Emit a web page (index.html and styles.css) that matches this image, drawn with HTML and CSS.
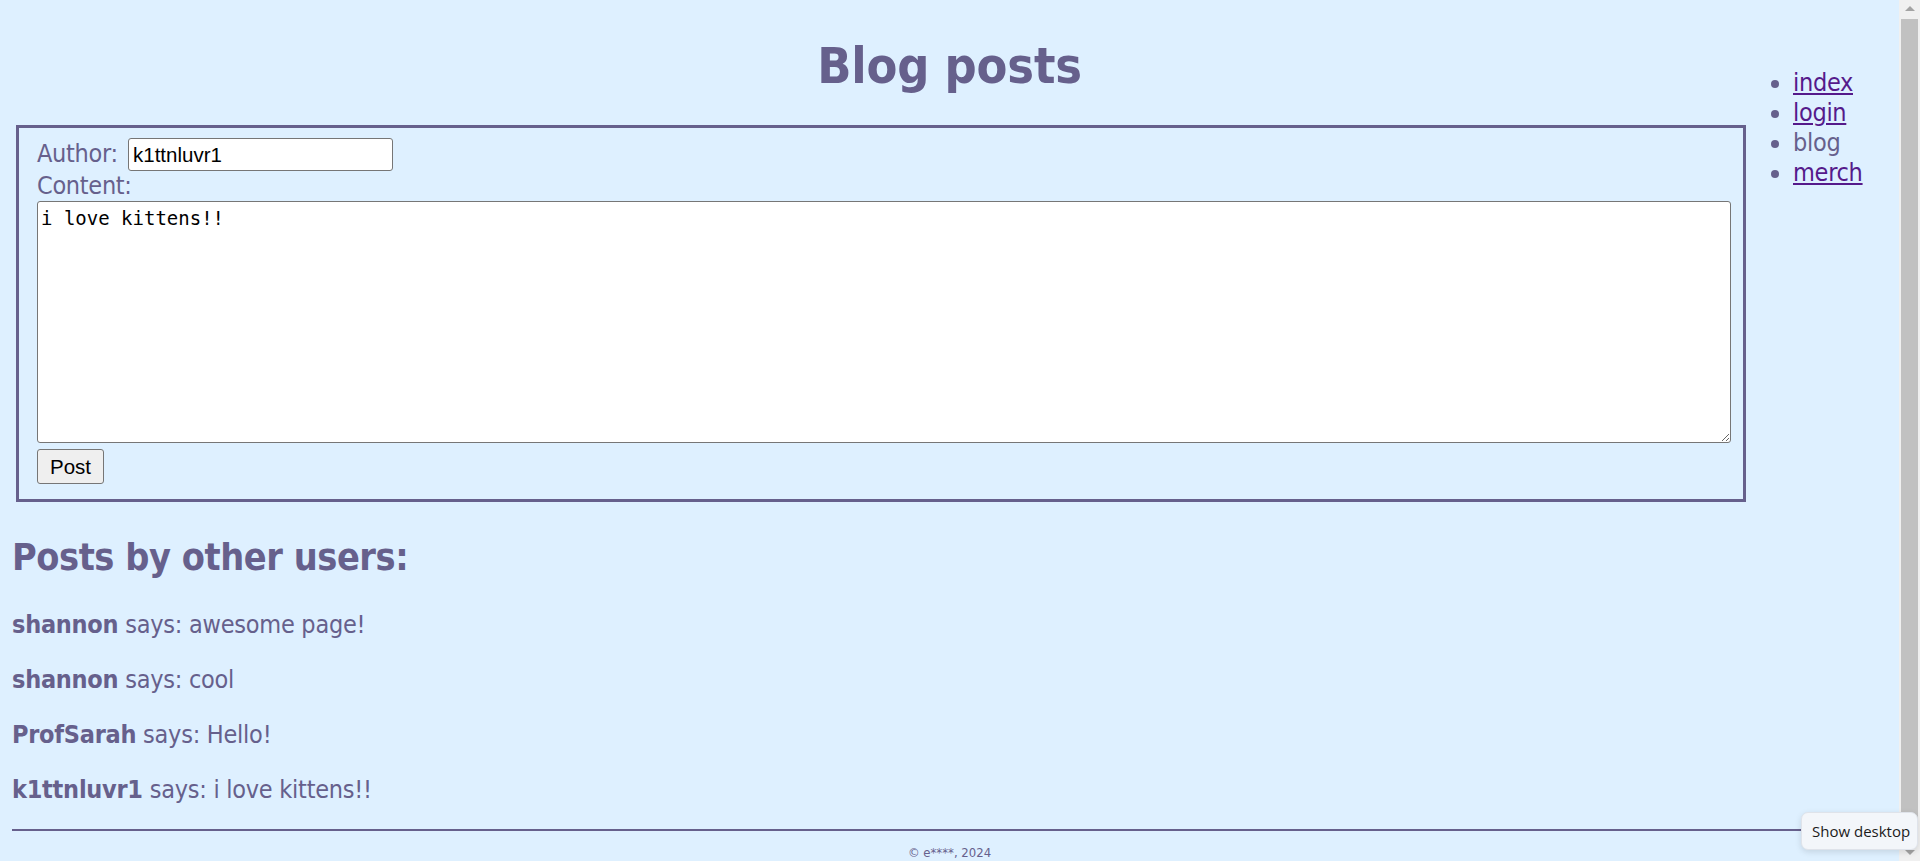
FILE: index.html
```html
<!DOCTYPE html>
<html lang="en">
<head>
<meta charset="utf-8">
<title>Blog posts</title>
<link rel="stylesheet" href="styles.css">
</head>
<body>
<div class="page">
  <div class="layout">
    <h1 class="title">Blog posts</h1>
    <nav class="nav">
      <ul class="nav-list">
        <li><a href="#" class="nav-link">index</a></li>
        <li><a href="#" class="nav-link">login</a></li>
        <li class="nav-current">blog</li>
        <li><a href="#" class="nav-link">merch</a></li>
      </ul>
    </nav>
    <form class="compose">
      <div class="field-row">
        <label class="field-label" for="author">Author:</label>
        <input class="author-input" id="author" type="text" value="k1ttnluvr1">
      </div>
      <label class="content-label" for="content">Content:</label>
      <textarea class="content-input" id="content">i love kittens!!</textarea>
      <button class="post-button" type="button">Post</button>
    </form>
  </div>
  <h2 class="section-title">Posts by other users:</h2>
  <div class="posts">
    <p class="post"><b class="post-author">shannon</b> says: awesome page!</p>
    <p class="post"><b class="post-author">shannon</b> says: cool</p>
    <p class="post"><b class="post-author">ProfSarah</b> says: Hello!</p>
    <p class="post"><b class="post-author">k1ttnluvr1</b> says: i love kittens!!</p>
  </div>
  <hr class="rule">
  <footer class="footer">© e****, 2024</footer>
</div>
<div class="scrollbar">
  <div class="sb-arrow"><span class="tri-up"></span></div>
  <div class="sb-thumb"></div>
  <div class="sb-arrow"><span class="tri-down"></span></div>
</div>
<div class="tooltip">Show desktop</div>
</body>
</html>
```
FILE: styles.css
```css
html, body {
  margin: 0;
  padding: 0;
  height: 861px;
  overflow: hidden;
}
body {
  display: flex;
  background: #def0ff;
  color: #66608c;
  font-family: "DejaVu Sans Condensed", "DejaVu Sans", sans-serif;
  font-size: 25px;
  position: relative;
}
.page {
  flex: 1;
  padding: 0 12px;
  min-width: 0;
}
.layout {
  display: grid;
  grid-template-columns: 1fr 141px;
}
.title {
  grid-column: 1 / -1;
  grid-row: 1;
  margin: 36px 0 29px;
  font-size: 50px;
  line-height: 60px;
  text-align: center;
  font-weight: bold;
  letter-spacing: -0.2px;
}
.nav {
  grid-column: 2;
  grid-row: 1 / span 2;
  align-self: start;
  margin-top: 68px;
}
.nav-list {
  margin: 0;
  padding-left: 47px;
  list-style: disc;
  line-height: 30px;
  letter-spacing: -0.3px;
}
.nav-link {
  color: #551a8b;
}
.nav-current {
  color: #66608c;
}
.compose {
  grid-column: 1;
  grid-row: 2;
  margin-left: 4px;
  border: 3px solid #66608c;
  padding: 10px 12px 15px 18px;
  display: flex;
  flex-direction: column;
  align-items: flex-start;
}
.field-row {
  display: flex;
  align-items: baseline;
}
.field-label {
  width: 91px;
  line-height: 30px;
  letter-spacing: -0.3px;
}
.author-input {
  box-sizing: border-box;
  width: 265px;
  height: 33px;
  padding: 1px 4px;
  border: 1px solid #767676;
  border-radius: 3px;
  background: #fff;
  color: #000;
  font-family: "Liberation Sans", Arial, sans-serif;
  font-size: 20.5px;
}
.content-label {
  margin-top: 2px;
  line-height: 26px;
  letter-spacing: -0.3px;
}
.content-input {
  box-sizing: border-box;
  align-self: stretch;
  margin-top: 2px;
  height: 242px;
  padding: 5px 3px 3px;
  border: 1px solid #767676;
  border-radius: 3px;
  background: #fff;
  color: #000;
  font-family: "DejaVu Sans Mono", monospace;
  font-size: 19px;
  line-height: 22px;
}
.post-button {
  box-sizing: border-box;
  margin-top: 6px;
  width: 67px;
  height: 35px;
  padding: 0;
  border: 1px solid #767676;
  border-radius: 3px;
  background: #efefef;
  color: #000;
  font-family: "Liberation Sans", Arial, sans-serif;
  font-size: 20.5px;
}
.section-title {
  margin: 33px 0 30px;
  font-size: 37.5px;
  line-height: 45px;
  font-weight: bold;
  letter-spacing: -0.45px;
}
.post {
  margin: 25px 0;
  line-height: 30px;
  letter-spacing: -0.25px;
}
.post:first-child {
  margin-top: 0;
}
.post:last-child {
  margin-bottom: 24px;
}
.post-author {
  font-weight: bold;
}
.rule {
  margin: 0 0 14px;
  border: 0;
  height: 2px;
  background: #66608c;
}
.footer {
  text-align: center;
  font-size: 13px;
  line-height: 16px;
}
.scrollbar {
  width: 21px;
  flex: none;
  background: #f0f0f0;
  display: flex;
  flex-direction: column;
}
.sb-arrow {
  height: 17px;
  display: flex;
  align-items: center;
  justify-content: center;
}
.tri-up {
  width: 0;
  height: 0;
  border-left: 5px solid transparent;
  border-right: 5px solid transparent;
  border-bottom: 5px solid #a3a3a3;
}
.tri-down {
  width: 0;
  height: 0;
  border-left: 5px solid transparent;
  border-right: 5px solid transparent;
  border-top: 5px solid #a3a3a3;
}
.sb-thumb {
  flex: 1;
  margin: 2px 2px 2px 2px;
  background: #c1c1c1;
}
.tooltip {
  position: absolute;
  left: 1801px;
  top: 812px;
  width: 117px;
  height: 38px;
  box-sizing: border-box;
  padding-left: 10px;
  display: flex;
  align-items: center;
  background: #f3f6fa;
  border: 1px solid #dfe3ea;
  border-radius: 7px;
  box-shadow: 0 2px 6px rgba(0, 0, 0, 0.12);
  color: #1b1b1b;
  font-family: "Open Sans", "Noto Sans", sans-serif;
  font-size: 15px;
}
```
